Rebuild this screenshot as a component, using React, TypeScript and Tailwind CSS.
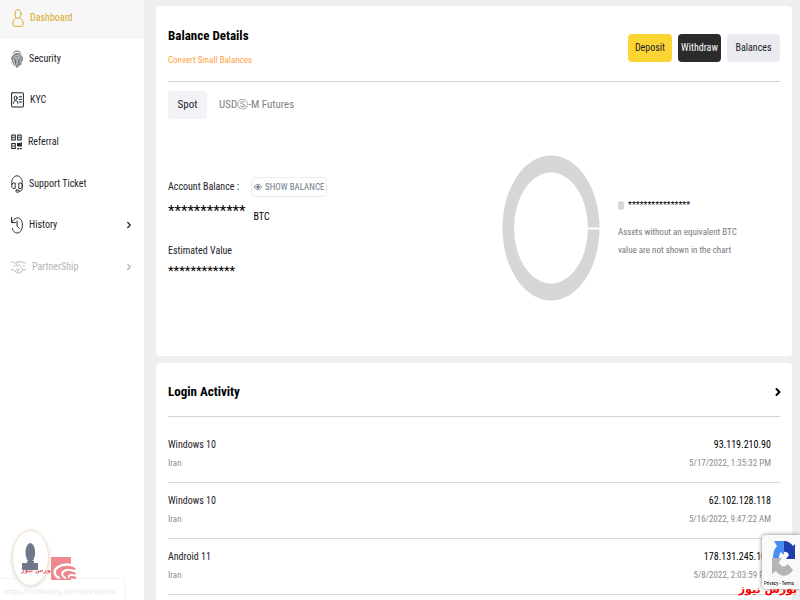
import { useState } from "react";
import type { ReactNode } from "react";
import { ChevronRight } from "lucide-react";

interface NavItem {
  label: string;
  icon: ReactNode;
  hasChildren?: boolean;
  disabled?: boolean;
}

interface LoginEntry {
  device: string;
  country: string;
  ip: string;
  date: string;
}

const iconProps = {
  fill: "none",
  stroke: "currentColor",
  strokeLinecap: "round" as const,
  strokeLinejoin: "round" as const,
  preserveAspectRatio: "none",
  "aria-hidden": true,
};

function UserIcon() {
  return (
    <svg {...iconProps} viewBox="0 0 12 18" strokeWidth="1" className="h-[18px] w-3">
      <ellipse cx="6" cy="5" rx="3" ry="4.3" />
      <path d="M3.6 9.4C1.6 10.2.8 12 .8 15c0 1.6.8 2.3 2 2.3h6.4c1.2 0 2-.7 2-2.3 0-3-.8-4.8-2.8-5.6" />
    </svg>
  );
}

function FingerprintIcon() {
  return (
    <svg {...iconProps} viewBox="0 0 12 18" strokeWidth="0.7" className="h-[18px] w-3">
      <path d="M2.2 3C4.2.3 7.8.3 9.8 3M.6 9.5C.6 2 11.4 1 11.4 9.5v1" />
      <path d="M.9 12.5c.7-.8.9-1.8.9-3 0-6.4 8.4-6.4 8.4 0 0 2 0 3.4-.4 5" />
      <path d="M2.5 14.5c.6-1.4.7-3 .7-5 0-4.4 5.6-4.4 5.6 0 0 2.6 0 4.2-.6 6.2" />
      <path d="M4 16c.6-2 .6-4 .6-6.4 0-2.2 2.8-2.2 2.8 0 0 3-.1 5.2-.6 7.4M6 9.6c0 3 0 5.4-.5 7.6" />
    </svg>
  );
}

function IdCardIcon() {
  return (
    <svg {...iconProps} viewBox="0 0 13 16" strokeWidth="1" className="h-4 w-[13px]">
      <rect x=".6" y=".8" width="11.8" height="14.2" rx=".5" />
      <ellipse cx="4.6" cy="6" rx="1.4" ry="1.9" />
      <path d="M2.3 11.4c.1-2 .9-2.7 2.3-2.7s2.2.7 2.3 2.7M8.2 4.8h2.4M8.2 7.4h2.4M8.2 10h2.4" />
    </svg>
  );
}

function QrIcon() {
  return (
    <svg {...iconProps} viewBox="0 0 11 16" strokeWidth="1.2" className="h-4 w-[11px]">
      <path d="M.8 1h3.4v5H.8zM6.7 1h3.4v5H6.7zM.8 9.5h3.4v5H.8z" />
      <path d="M2.2 3.5h.6M8.1 3.5h.6M2.2 12h.6" />
      <path d="M6.8 9.5v2.2h1.6V9.5M10.1 9v3M6.8 14.8h.6M9.5 14.5h.6" strokeWidth="1.6" />
    </svg>
  );
}

function SupportIcon() {
  return (
    <svg {...iconProps} viewBox="0 0 12 18" strokeWidth="0.9" className="h-[18px] w-3">
      <path d="M.8 9.600V7.400C.8-1.400 11.200-1.400 11.200 7.400v6.200c0 1.800-1 2.600-3 2.600" />
      <path d="M3.800 8H2C.3 8.800.3 12.700 2 13.400h1.800zM8.200 8H10c1.700.8 1.700 4.700 0 5.400H8.200z" />
      <rect x="4.900" y="15" width="3.300" height="2.200" rx="1" />
    </svg>
  );
}

function HistoryIcon() {
  return (
    <svg {...iconProps} viewBox="0 0 12 18" strokeWidth="1" className="h-[18px] w-3">
      <path d="M.6 1.6v5h3.8M1 6.200C4.400-.8 11.400 1 11.400 9c0 9.200-8 10.800-10.200 3.400" />
      <path d="M6 5v5l2.200 2.400" />
    </svg>
  );
}

function HandshakeIcon() {
  return (
    <svg {...iconProps} viewBox="0 0 15 14" strokeWidth="0.9" className="h-3.5 w-[15px]">
      <path d="M.5 2h2.200L4 3.400l2-1.600h5L12.400 3h2M.5 9.800h2L6 13c1 .8 2 .2 2.100-.4 1 .5 1.900-.1 1.900-1 1 .1 1.600-.6 1.300-1.600l1.200-.4h2" />
      <path d="M7.600 2.200 4.800 5c.7 1.600 2.200 1 3.200-.5l3.600 4.700M6.500 8.500 5 10.700M8 9.200l-1.200 2.200M3 6h1M12.300 6h1.200" />
    </svg>
  );
}

const navItems: NavItem[] = [
  { label: "Security", icon: <FingerprintIcon /> },
  { label: "KYC", icon: <IdCardIcon /> },
  { label: "Referral", icon: <QrIcon /> },
  { label: "Support Ticket", icon: <SupportIcon /> },
  { label: "History", icon: <HistoryIcon />, hasChildren: true },
  { label: "PartnerShip", icon: <HandshakeIcon />, hasChildren: true, disabled: true },
];

const logins: LoginEntry[] = [
  { device: "Windows 10", country: "Iran", ip: "93.119.210.90", date: "5/17/2022, 1:35:32 PM" },
  { device: "Windows 10", country: "Iran", ip: "62.102.128.118", date: "5/16/2022, 9:47:22 AM" },
  { device: "Android 11", country: "Iran", ip: "178.131.245.108", date: "5/8/2022, 2:03:59 PM" },
];

function Sidebar() {
  return (
    <aside className="w-36 shrink-0 bg-white">
      <a href="#dashboard" className="flex h-[39px] items-center gap-1.5 bg-[#f7f7f7] pb-1 pl-3 text-[#d9a92c]">
        <UserIcon />
        <span>Dashboard</span>
      </a>
      <nav className="grid h-[250px] grid-rows-6">
        {navItems.map((item) => (
          <a
            key={item.label}
            href={`#${item.label.toLowerCase()}`}
            className={`flex items-center gap-1.5 pr-2.5 pb-0.5 pl-[11px] ${item.disabled ? "text-[#b4b4b4]" : "text-[#1e2329]"}`}
          >
            {item.icon}
            <span>{item.label}</span>
            {item.hasChildren && <ChevronRight size={10} strokeWidth={3} className="ml-auto" />}
          </a>
        ))}
      </nav>
    </aside>
  );
}

function BalanceChart() {
  return (
    <svg viewBox="0 0 98 146" className="h-[146px] w-[98px] shrink-0" role="img" aria-label="Asset allocation">
      <path
        fill="#d6d6d6"
        fillRule="evenodd"
        d="M49 .5a48.500 72.500 0 1 0 0 145a48.500 72.500 0 1 0 0-145zM49 17.500a37 55.500 0 1 1 0 111a37 55.500 0 1 1 0-111z"
      />
      <path d="M85 73.500h13" stroke="white" strokeWidth="2" />
    </svg>
  );
}

function EyeIcon() {
  return (
    <svg {...iconProps} viewBox="0 0 8 8" strokeWidth="0.8" className="h-2 w-2">
      <path d="M.4 4C1.800.3 6.200.3 7.600 4 6.200 7.700 1.800 7.700.4 4z" />
      <circle cx="4" cy="4" r="1.300" fill="currentColor" />
    </svg>
  );
}

function BalanceDetails() {
  const [visible, setVisible] = useState(false);
  const mask = (value: string, length: number) => (visible ? value : "*".repeat(length));

  return (
    <section className="shrink-0 rounded bg-white px-3 pt-5 pb-[55px]">
      <header className="flex items-end justify-between border-b border-[#d3d4d5] pb-[13px]">
        <div>
          <h1 className="text-[13px] leading-5 font-bold text-black">Balance Details</h1>
          <a href="#convert" className="mt-[7px] mb-px block text-[9px] leading-[14px] text-[#ff9f43]">
            Convert Small Balances
          </a>
        </div>
        <div className="flex gap-1.5 pb-1.5 text-[#1e2329]">
          <button className="h-7 w-11 rounded bg-[#fcd535]">Deposit</button>
          <button className="h-7 w-[43px] rounded bg-[#2b2b2b] text-white">Withdraw</button>
          <button className="h-7 w-[53px] rounded bg-[#eaebf1]">Balances</button>
        </div>
      </header>

      <div className="mt-[9px] flex gap-3 text-[11px]">
        <button className="h-7 w-[39px] rounded bg-[#f3f3f7] text-[#1e2329]">Spot</button>
        <button className="text-[#808186]">USDⓈ-M Futures</button>
      </div>

      <div className="mt-9 flex items-center">
        <div className="flex-1 pt-0.5 text-[#1e2329]">
          <div className="flex h-5 items-center gap-3">
            <span>Account Balance :</span>
            <button
              onClick={() => setVisible(!visible)}
              className="flex h-5 items-center gap-[3px] rounded-sm border border-[#eaecef] px-0.5 text-[9px] text-[#707a8a]"
            >
              <EyeIcon />
              {visible ? "HIDE BALANCE" : "SHOW BALANCE"}
            </button>
          </div>
          <div className="flex items-start gap-2 text-black">
            <span className="text-[15px] leading-7">{mask("0.00000000", 12)}</span>
            <span className="mt-3">BTC</span>
          </div>
          <p className="mt-[18px]">Estimated Value</p>
          <p className="mt-0.5 text-[13px] leading-5 text-black">{mask("$ 0.00", 12)}</p>
        </div>
        <BalanceChart />
        <div className="w-[180px] shrink-0 pr-10 pl-[18px]">
          <p className="flex items-center gap-1 text-black">
            <span className="h-[9px] w-1.5 rounded-sm bg-[#d6d6d6]" />
            <span className="text-[9px]">{mask("0.00000000 BTC", 16)}</span>
          </p>
          <p className="mt-2.5 text-[9px] leading-[18px] text-[#77787c]">
            Assets without an equivalent BTC value are not shown in the chart
          </p>
        </div>
      </div>
    </section>
  );
}

function LoginActivity() {
  return (
    <section className="shrink-0 rounded bg-white px-3 pb-4">
      <header className="flex h-[54px] items-center justify-between border-b border-[#d3d4d5] pt-1">
        <h2 className="text-[13px] font-bold text-black">Login Activity</h2>
        <a href="#activity" aria-label="All login activity" className="text-black">
          <ChevronRight size={12} strokeWidth={4} className="-mr-1" />
        </a>
      </header>
      <ul className="pt-2.5">
        {logins.map((login) => (
          <li key={login.ip} className="flex h-14 justify-between border-b border-[#d8d9da] pt-[9px] pr-[9px]">
            <div>
              <p className="leading-[18px] text-[#1e2329]">{login.device}</p>
              <p className="text-[9px] leading-[18px] text-[#8f9196]">{login.country}</p>
            </div>
            <div className="text-right">
              <p className="leading-[18px] text-black">{login.ip}</p>
              <p className="text-[9px] leading-[18px] text-[#8a8a8a]">{login.date}</p>
            </div>
          </li>
        ))}
      </ul>
    </section>
  );
}

function ProfileBadge() {
  return (
    <div className="fixed bottom-0 left-0 h-[70px] w-[126px]">
      <span className="absolute right-0 bottom-0 left-0 h-[22px] rounded-tr border-t border-r border-[#f5f5f5] pl-1 font-['Open_Sans',sans-serif] text-[7px] leading-[26px] whitespace-nowrap text-[#e4e4e4]">
        https://coinlocally.com/dashboard
      </span>
      <svg viewBox="0 0 38 56" className="absolute top-0 left-3 h-14 w-[38px] drop-shadow-sm" aria-hidden>
        <ellipse cx="18.500" cy="28" rx="18" ry="27.500" fill="white" stroke="#f9d9b8" strokeWidth="0.8" />
        <ellipse cx="18.300" cy="22.500" rx="4.800" ry="9.500" fill="#707789" />
        <path d="M15 31h7v2h4v7H10v-7h5z" fill="#707789" />
      </svg>
      <span
        dir="rtl"
        className="absolute top-8 left-[21px] font-['DejaVu_Sans',sans-serif] text-[6px] leading-4 font-bold whitespace-nowrap text-[#dc5c63]"
      >
        بورس نیوز
      </span>
      <svg viewBox="0 0 26 23" fill="none" className="absolute top-[27px] left-[51px] h-[23px] w-[26px]" aria-hidden>
        <path d="M0 0h20v23H0z" fill="#ed898e" />
        <path d="M21 8C9 6 1 12 4.500 18c.8 1.500 2 2.500 4 3" stroke="white" strokeWidth="2.400" />
        <path d="M22 13c-8-1-13 2-10 6 .6 1 1.500 1.700 3 2" stroke="white" strokeWidth="2" />
        <path d="M24 18c-4-1-7 0-6 3" stroke="white" strokeWidth="1.800" />
        <path d="M18 10.500c2.500 0 4.500.5 6 2M18 15.500c3 0 5 .3 6.500 1.500M19 20.500c2-.5 4-.3 6 .8" stroke="#ed898e" strokeWidth="2.400" />
      </svg>
    </div>
  );
}

function RecaptchaBadge() {
  return (
    <div className="fixed right-0 bottom-0 h-[65px] w-[38px]">
      <div className="h-[54px] rounded-l-sm bg-[#f9f9f9] pt-1.5 pl-0.5 shadow-[0_0_4px_gray]">
        <svg viewBox="0 0 24 36" className="ml-2 h-9 w-6" aria-hidden>
          <path d="M12 0H2l3 5C2 8 1 12 1 17h6c0-3 1-5 2-6l3 3z" fill="#4a8df0" />
          <path d="M12 0c4 0 7 2 9 5l2-2v15h-9l3-4c-1-3-3-4-5-3z" fill="#1c3fac" />
          <path d="M0 17h10l-3 4c1 5 6 6 9 2l5 6c-4 7-13 8-17 1l-4 3z" fill="#b5b5b5" />
        </svg>
        <p className="text-[5px] leading-3 whitespace-nowrap text-black">Privacy - Terms</p>
      </div>
      <span
        dir="rtl"
        className="absolute right-[3px] bottom-1 font-['DejaVu_Sans',sans-serif] text-[11px] leading-3 font-bold whitespace-nowrap text-[#fb0000]"
      >
        بورس نیوز
      </span>
    </div>
  );
}

export default function App() {
  return (
    <div className="flex h-screen overflow-hidden bg-[#efeff2] font-['Roboto_Condensed','Roboto',sans-serif] text-[10px] leading-4">
      <Sidebar />
      <main className="flex min-w-0 flex-1 flex-col gap-[7px] pt-1.5 pr-2 pl-3">
        <BalanceDetails />
        <LoginActivity />
      </main>
      <ProfileBadge />
      <RecaptchaBadge />
    </div>
  );
}
